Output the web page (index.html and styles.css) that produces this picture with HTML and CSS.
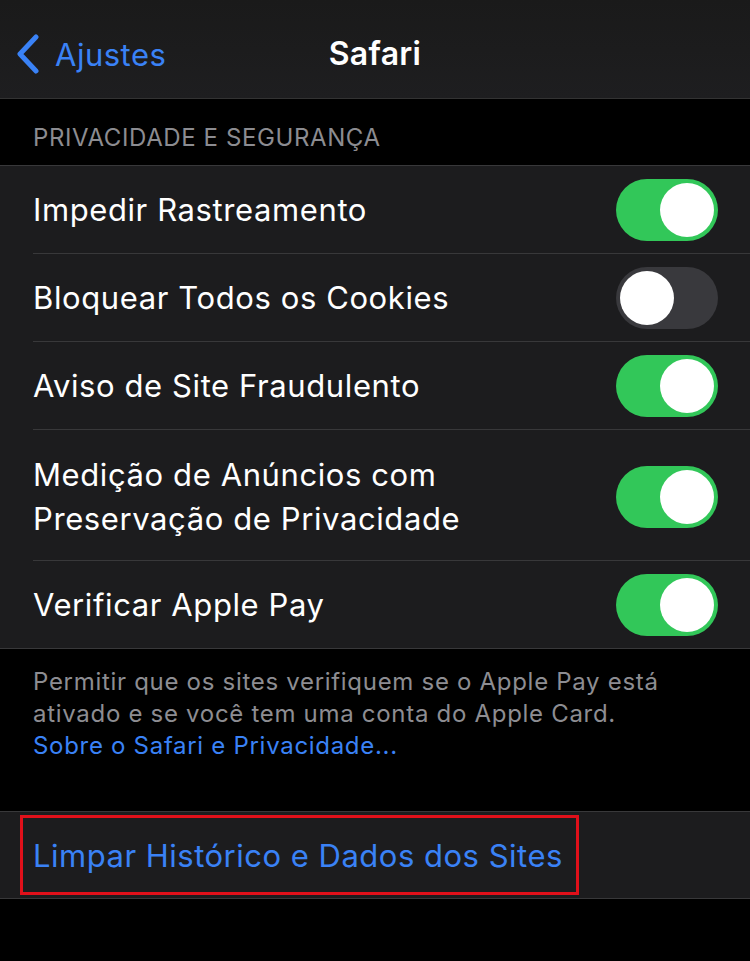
FILE: index.html
```html
<!DOCTYPE html>
<html lang="pt-BR">
<head>
    <meta charset="UTF-8">
    <meta name="viewport" content="width=device-width, initial-scale=1.0">
    <title>Safari</title>
    <link rel="stylesheet" href="styles.css">
</head>
<body>

<div class="navbar">
    <a class="back" href="#">
        <svg class="chevron" width="24" height="40" viewBox="0 0 24 40">
            <path d="M20 3 L4 20 L20 37" fill="none" stroke="#3a82f6" stroke-width="5" stroke-linecap="round" stroke-linejoin="round"/>
        </svg>
        <span>Ajustes</span>
    </a>
    <h1 class="title">Safari</h1>
</div>

<div class="section-header">PRIVACIDADE E SEGURANÇA</div>

<div class="group">
    <div class="row">
        <span class="label">Impedir Rastreamento</span>
        <span class="toggle on"><span class="knob"></span></span>
    </div>
    <div class="row">
        <span class="label">Bloquear Todos os Cookies</span>
        <span class="toggle"><span class="knob"></span></span>
    </div>
    <div class="row">
        <span class="label">Aviso de Site Fraudulento</span>
        <span class="toggle on"><span class="knob"></span></span>
    </div>
    <div class="row tall">
        <span class="label">Medição de Anúncios com<br>Preservação de Privacidade</span>
        <span class="toggle on"><span class="knob"></span></span>
    </div>
    <div class="row">
        <span class="label">Verificar Apple Pay</span>
        <span class="toggle on"><span class="knob"></span></span>
    </div>
</div>

<div class="section-footer">
    <p>Permitir que os sites verifiquem se o Apple Pay está ativado e se você tem uma conta do Apple Card.</p>
    <a href="#">Sobre o Safari e Privacidade...</a>
</div>

<div class="group">
    <div class="row action">
        <span class="highlight">Limpar Histórico e Dados dos Sites</span>
    </div>
</div>

</body>
</html>
```

FILE: styles.css
```css
body {
    margin: 0;
    background: #000;
    font-family: Inter, "Noto Sans", sans-serif;
    color: #fff;
}

.navbar {
    position: relative;
    height: 98px;
    background: linear-gradient(#1a1a1a, #1e1e20);
    border-bottom: 1px solid #333;
    display: flex;
    align-items: center;
    justify-content: center;
}

.back {
    position: absolute;
    left: 16px;
    top: 34px;
    display: flex;
    align-items: center;
    gap: 15px;
    color: #3a82f6;
    text-decoration: none;
    font-size: 31px;
    letter-spacing: 0.5px;
}

.title {
    margin: 0;
    font-size: 32px;
    font-weight: 600;
    margin-top: 8px;
    letter-spacing: 0.3px;
}

.section-header {
    height: 67px;
    box-sizing: border-box;
    padding: 24px 33px 0;
    font-size: 24px;
    letter-spacing: 0.6px;
    color: #8c8c91;
    border-bottom: 1px solid #38383a;
}

.group {
    background: #1c1c1e;
}

.row {
    height: 87px;
    margin-left: 33px;
    padding-right: 32px;
    display: flex;
    align-items: center;
    justify-content: space-between;
    border-bottom: 1px solid #38383a;
    font-size: 31px;
    letter-spacing: 0.6px;
}

.group .row:last-child {
    margin-left: 0;
    padding-left: 33px;
}

.row.tall {
    line-height: 44px;
    padding-top: 3px;
    box-sizing: border-box;
    height: 131px;
}

.toggle {
    width: 102px;
    height: 62px;
    border-radius: 31px;
    background: #39393d;
    display: flex;
    align-items: center;
    padding: 0 4px;
    box-sizing: border-box;
}

.toggle.on {
    background: #32c759;
    justify-content: flex-end;
}

.knob {
    width: 54px;
    height: 54px;
    border-radius: 50%;
    background: #fff;
}

.section-footer {
    padding: 17px 33px 0;
    height: 163px;
    box-sizing: border-box;
    border-bottom: 1px solid #38383a;
    font-size: 24px;
    line-height: 32px;
    letter-spacing: 0.7px;
    color: #8d8d92;
}

.section-footer p {
    margin: 0;
}

.section-footer a {
    color: #3a82f6;
    text-decoration: none;
}

.row.action {
    height: 86px;
    color: #3a82f6;
    letter-spacing: 0.5px;
}

.highlight {
    position: relative;
}

.highlight::after {
    content: "";
    position: absolute;
    left: -13px;
    right: -16px;
    top: -22px;
    bottom: -21px;
    border: 3px solid #e0101a;
}
```
